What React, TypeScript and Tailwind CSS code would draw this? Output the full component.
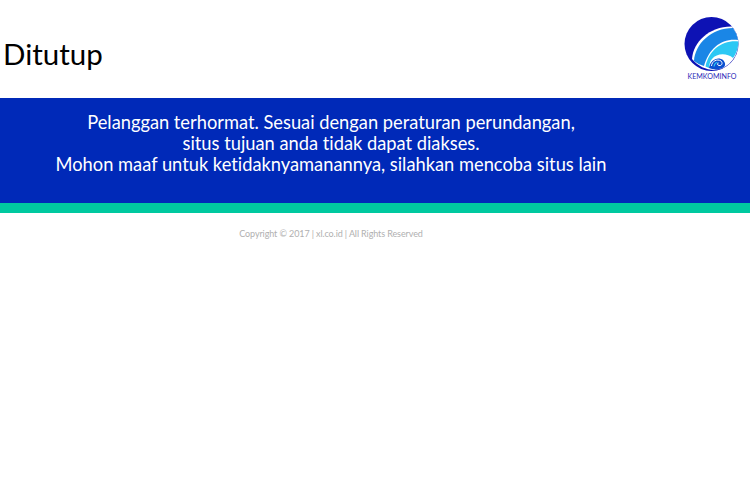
import React from "react";

// viewBox uses page pixels minus (684, 16)
const Logo = () => (
  <svg width="56" height="56" viewBox="0 0 56 56" className="block">
    <circle cx="27.500" cy="28" r="27" fill="#0d12b4" />
    <path d="M8 43C9 26 26 10 48 10.500A27 27 0 0 1 45 48C40 52 36 53 30 54C22 54 14 50 8 43Z" fill="#ffffff" />
    <path d="M10 45C11 28 27 12 49 12A27 27 0 0 1 54 24C38 22 25 32 20 50C16 49 13 47 10 45Z" fill="#1a86e6" />
    <path d="M21.500 50.500C25 34 38 24 54.300 25.500C54.500 32 52 38 49 42C43 37 33 37 28 43C26 45 25 49 25 52Z" fill="#2cc8f4" />
    <path d="M25 52C26 44 34 40 39 44C41 46 42 49 40 51C36 54 29 54 25 52Z" fill="#0a4fd0" />
    <path d="M27.500 50C28 45 33 42.500 37 45C39 47 38 50 35 49.500C33 49 33 47.500 34.500 47" fill="none" stroke="#ffffff" strokeWidth="1" />
    <path d="M30 50.500C30.500 48 32 46.500 33.500 46.500" fill="none" stroke="#2cc8f4" strokeWidth="1.200" />
  </svg>
);

export default function App() {
  return (
    <div className="min-h-[500px] bg-white font-['Lato','Open_Sans',sans-serif] [font-variant-ligatures:none]">
      <header className="flex h-[98px] items-start justify-between">
        <h1 className="mt-[35px] pl-[3px] text-[29.500px] leading-[38px] font-normal text-black">Ditutup</h1>
        <div className="mr-[10px] mt-[16px] flex w-[56px] flex-col items-center">
          <Logo />
          <span className="mt-0 whitespace-nowrap text-[7.100px] leading-[10px] text-[#2a2ab8]">KEMKOMINFO</span>
        </div>
      </header>
      <section className="h-[105px] bg-[#0029b8] pt-[14px]">
        <p className="w-[662px] text-center text-[18.300px] leading-[20.750px] text-white">
          Pelanggan terhormat. Sesuai dengan peraturan perundangan,
          <br />
          situs tujuan anda tidak dapat diakses.
          <br />
          Mohon maaf untuk ketidaknyamanannya, silahkan mencoba situs lain
        </p>
      </section>
      <div className="h-[10px] bg-[#00c9a0]" />
      <p className="mt-[14px] w-[662px] text-center text-[9px] leading-[13px] tracking-[-0.1px] text-[#b0b0b0]">
        Copyright © 2017 | xl.co.id | All Rights Reserved
      </p>
    </div>
  );
}
